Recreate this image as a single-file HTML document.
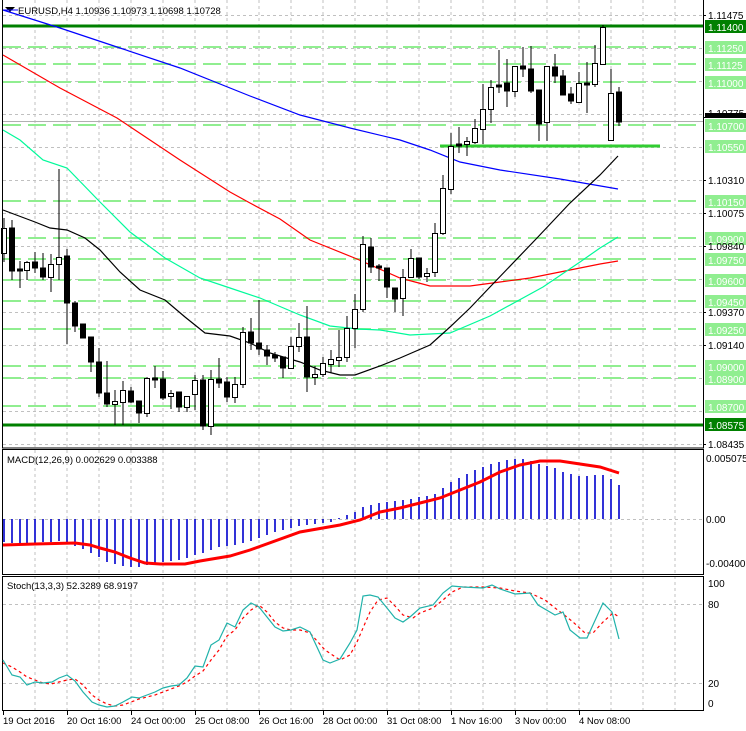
<!DOCTYPE html>
<html><head><meta charset="utf-8"><style>
html,body{margin:0;padding:0;background:#fff;}
svg{display:block;font-family:"Liberation Sans",sans-serif;}
</style></head><body>
<svg width="746" height="731" viewBox="0 0 746 731" xmlns="http://www.w3.org/2000/svg">
<rect width="746" height="731" fill="#fff"/>
<g stroke="#c0c0c0" stroke-width="1" stroke-dasharray="3,3" fill="none">
<path d="M35 0V710M67 0V710M99 0V710M131 0V710M163 0V710M195 0V710M227 0V710M259 0V710M291 0V710M323 0V710M355 0V710M387 0V710M419 0V710M451 0V710M483 0V710M515 0V710M547 0V710M579 0V710M611 0V710M643 0V710M675 0V710"/>
<path d="M3 15.5H703M3 48.5H703M3 81.5H703M3 114.5H703M3 147.5H703M3 180.5H703M3 213.5H703M3 246.5H703M3 279.5H703M3 312.5H703M3 345.5H703M3 378.5H703M3 411.5H703M3 444.5H703"/>
<path d="M3 519.5H703M3 604.5H703M3 683.5H703"/>
</g>
<g stroke="#90ee90" stroke-width="2" stroke-dasharray="18,7" fill="none">
<path d="M3 47H703M3 64H703M3 82H703M3 125H703M3 201H703M3 238H703M3 259H703M3 280H703M3 301H703M3 329H703M3 366H703M3 378H703M3 406H703"/>
</g>
<path d="M3 121.5H703" stroke="#b0b0b0" stroke-width="1"/>
<path d="M3 26H703M3 425H703" stroke="#008000" stroke-width="3"/>
<path d="M440 146H660" stroke="#32cd32" stroke-width="3"/>
<g fill="none" stroke-width="1.2">
<polyline stroke="#0000ff" points="3,10 60,28 120,48 180,68 250,96 300,115 350,128 400,140 430,150 460,162 500,170 560,179 618,189"/>
<polyline stroke="#ff0000" points="3,55 60,88 117,118 180,160 230,192 250,203 280,219 310,240 357,259 400,278 430,286 470,286 500,282 530,278 560,272 600,264 618,261"/>
<polyline stroke="#00fa9a" points="3,130 20,140 43,160 67,168 100,202 130,232 165,258 200,278 230,288 260,298 300,315 330,326 358,329 380,330 410,335 450,333 490,316 543,287 580,262 600,248 618,237"/>
<polyline stroke="#000" points="3,210 35,222 50,228 67,230 85,238 100,250 120,272 140,290 165,300 185,317 205,333 230,336 250,343 270,353 300,362 320,370 340,375 355,375 380,366 400,358 430,345 450,327 470,308 490,287 537,238 570,203 600,175 618,156"/>
</g>
<g stroke="#000" stroke-width="1">
<path d="M4 218V262M12 220V280M20 261V288M27 261V280M35 252V273M43 253V280M51 254V292M59 169V280M67 249V344M75 301V332M83 324V338M91 337V372M99 348V397M107 361V407M115 390V425M123 381V425M131 387V403M139 401V423M147 377V417M155 366V388M163 371V400M171 390V409M179 392V412M187 396V412M195 375V410M203 375V430M211 370V435M219 358V388M227 377V402M235 377V403M243 327V388M251 318V350M259 300V355M267 345V365M275 352V362M283 357V378M291 337V368M299 323V352M307 306V392M315 366V385M323 357V377M331 350V373M339 330V367M347 316V362M355 294V348M363 236V312M371 238V273M379 264V281M387 268V298M395 288V312M403 269V316M411 249V277M419 258V279M427 268V282M435 223V277M443 175V235M451 133V194M459 127V153M467 137V156M475 119V144M483 84V144M491 80V123M499 50V93M507 59V107M515 66V97M523 47V77M531 46V93M539 90V141M547 66V141M555 54V83M563 70V95M571 87V104M579 72V102M587 62V113M595 45V87M603 25V64M611 69V141M619 87V126"/>
<g fill="#fff">
<rect x="1.5" y="228.5" width="5" height="25"/><rect x="24.5" y="262.5" width="5" height="8"/><rect x="48.5" y="264.5" width="5" height="13"/><rect x="56.5" y="257.5" width="5" height="7"/>
<rect x="112.5" y="401.5" width="5" height="3"/><rect x="120.5" y="390.5" width="5" height="12"/><rect x="144.5" y="378.5" width="5" height="35"/><rect x="168.5" y="393.5" width="5" height="3"/>
<rect x="184.5" y="396.5" width="5" height="11"/><rect x="192.5" y="380.5" width="5" height="14"/><rect x="208.5" y="379.5" width="5" height="47"/><rect x="232.5" y="384.5" width="5" height="13"/>
<rect x="240.5" y="332.5" width="5" height="52"/><rect x="288.5" y="346.5" width="5" height="22"/><rect x="296.5" y="337.5" width="5" height="9"/><rect x="312.5" y="374.5" width="5" height="3"/>
<rect x="320.5" y="363.5" width="5" height="11"/><rect x="328.5" y="359.5" width="5" height="5"/><rect x="336.5" y="357.5" width="5" height="3"/><rect x="344.5" y="328.5" width="5" height="29"/>
<rect x="352.5" y="309.5" width="5" height="19"/><rect x="360.5" y="244.5" width="5" height="65"/><rect x="400.5" y="277.5" width="5" height="21"/><rect x="408.5" y="258.5" width="5" height="19"/>
<rect x="424.5" y="273.5" width="5" height="3"/><rect x="432.5" y="233.5" width="5" height="39"/><rect x="440.5" y="188.5" width="5" height="45"/><rect x="448.5" y="146.5" width="5" height="43"/>
<rect x="464.5" y="141.5" width="5" height="3"/><rect x="472.5" y="128.5" width="5" height="14"/><rect x="480.5" y="109.5" width="5" height="20"/><rect x="488.5" y="87.5" width="5" height="22"/>
<rect x="512.5" y="66.5" width="5" height="25"/><rect x="544.5" y="66.5" width="5" height="56"/><rect x="576.5" y="83.5" width="5" height="19"/><rect x="592.5" y="63.5" width="5" height="21"/>
<rect x="600.5" y="27.5" width="5" height="37"/><rect x="608.5" y="93.5" width="5" height="47"/>
</g>
<g fill="#000">
<rect x="9.5" y="228" width="5" height="43"/><rect x="17.5" y="269" width="5" height="2"/><rect x="32.5" y="262" width="5" height="6"/><rect x="40.5" y="268" width="5" height="9"/>
<rect x="64.5" y="256" width="5" height="47"/><rect x="72.5" y="303" width="5" height="23"/><rect x="80.5" y="324" width="5" height="14"/><rect x="88.5" y="337" width="5" height="25"/>
<rect x="96.5" y="362" width="5" height="31"/><rect x="104.5" y="393" width="5" height="11"/><rect x="128.5" y="391" width="5" height="11"/><rect x="136.5" y="401" width="5" height="12"/>
<rect x="152.5" y="378" width="5" height="2"/><rect x="160.5" y="379" width="5" height="19"/><rect x="176.5" y="392" width="5" height="15"/><rect x="200.5" y="380" width="5" height="46"/>
<rect x="216.5" y="379" width="5" height="4"/><rect x="224.5" y="382" width="5" height="15"/><rect x="248.5" y="332" width="5" height="11"/><rect x="256.5" y="343" width="5" height="6"/>
<rect x="264.5" y="350" width="5" height="6"/><rect x="272.5" y="355" width="5" height="3"/><rect x="280.5" y="357" width="5" height="11"/><rect x="304.5" y="337" width="5" height="40"/>
<rect x="368.5" y="247" width="5" height="20"/><rect x="376.5" y="266" width="5" height="2"/><rect x="384.5" y="268" width="5" height="19"/><rect x="392.5" y="288" width="5" height="11"/>
<rect x="416.5" y="258" width="5" height="19"/><rect x="456.5" y="144" width="5" height="2"/><rect x="496.5" y="85" width="5" height="2"/><rect x="504.5" y="83" width="5" height="8"/>
<rect x="520.5" y="66" width="5" height="3"/><rect x="528.5" y="69" width="5" height="22"/><rect x="536.5" y="90" width="5" height="34"/><rect x="552.5" y="67" width="5" height="9"/>
<rect x="560.5" y="76" width="5" height="19"/><rect x="568.5" y="94" width="5" height="7"/><rect x="584.5" y="83" width="5" height="2"/><rect x="616.5" y="92" width="5" height="30"/>
</g>
</g>
<g stroke="#000" fill="none" stroke-width="1">
<rect x="2.5" y="-1" width="701" height="449"/>
<rect x="2.5" y="449.5" width="701" height="125"/>
<rect x="2.5" y="576.5" width="701" height="134"/>
</g>
<path stroke="#0000cd" stroke-width="1.6" d="M4 519V542M12 519V543M20 519V543M27 519V543M35 519V543M43 519V542M51 519V542M59 519V541M67 519V543M75 519V546M83 519V549M91 519V553M99 519V557M107 519V562M115 519V564M123 519V566M131 519V567M139 519V567M147 519V565M155 519V563M163 519V562M171 519V561M179 519V560M187 519V558M195 519V555M203 519V553M211 519V550M219 519V547M227 519V546M235 519V545M243 519V543M251 519V541M259 519V538M267 519V535M275 519V532M283 519V530M291 519V528M299 519V526M307 519V525M315 519V524M323 519V523M331 519V522M339 519V518M347 519V515M355 519V512M363 519V507M371 519V505M379 519V503M387 519V502M395 519V501M403 519V500M411 519V499M419 519V497M427 519V496M435 519V494M443 519V488M451 519V482M459 519V478M467 519V474M475 519V470M483 519V467M491 519V464M499 519V462M507 519V460M515 519V459M523 519V459M531 519V461M539 519V464M547 519V466M555 519V468M563 519V472M571 519V474M579 519V476M587 519V476M595 519V475M603 519V475M611 519V479M619 519V485"/>
<polyline fill="none" stroke="#ff0000" stroke-width="3" points="3,545 35,544 75,543 90,545 100,548 115,552 130,558 145,563 160,564 185,564 200,561 230,556 250,550 300,532 340,525 360,520 380,512 400,508 420,503 440,498 460,490 480,482 500,472 520,465 540,461 560,461 580,464 600,467 619,473"/>
<polyline fill="none" stroke="#ff0000" stroke-width="1.2" stroke-dasharray="3,3" points="3,663 12,667 20,672 27,677 35,680 43,683 51,684 59,682 67,680 75,679 83,685 92,695 99,700 107,704 115,706 123,705 131,702 139,699 147,697 155,695 163,692 171,689 179,686 187,682 195,676 203,671 211,660 219,650 227,636 235,630 243,618 251,610 259,605 267,612 275,622 283,628 291,630 300,630 310,633 325,650 340,660 350,655 357,642 363,628 370,612 378,600 387,598 395,606 403,615 413,618 420,613 433,608 443,600 452,592 463,587 483,587 500,588 515,591 530,593 545,600 555,608 563,614 573,622 585,633 593,633 603,622 613,613 619,617"/>
<polyline fill="none" stroke="#20b2aa" stroke-width="1.2" points="3,660 12,675 20,677 27,685 35,682 43,683 52,682 59,678 67,675 75,681 83,692 92,702 99,705 107,707 115,706 123,702 132,697 139,698 147,695 155,692 163,688 171,686 179,685 187,678 195,666 203,667 211,645 219,640 227,623 235,627 243,610 251,603 259,607 267,617 275,627 283,631 291,630 300,627 310,632 323,660 330,663 340,659 350,643 357,630 363,596 370,595 378,597 387,608 395,618 403,622 410,617 420,608 433,605 443,593 452,586 463,587 483,588 492,585 500,589 515,594 530,593 538,605 555,615 563,612 570,630 580,638 587,638 603,603 612,612 619,639"/>
<g font-size="10" fill="#000">
<g fill="#90ee90">
<rect x="705" y="41" width="41" height="13"/><rect x="705" y="58" width="41" height="13"/><rect x="705" y="76" width="41" height="13"/>
<rect x="705" y="113" width="41" height="4"/>
<rect x="705" y="119" width="41" height="13"/><rect x="705" y="140" width="41" height="13"/><rect x="705" y="195" width="41" height="13"/>
<rect x="705" y="232" width="41" height="13"/><rect x="705" y="253" width="41" height="13"/><rect x="705" y="274" width="41" height="13"/><rect x="705" y="295" width="41" height="13"/>
<rect x="705" y="323" width="41" height="13"/><rect x="705" y="360" width="41" height="13"/><rect x="705" y="372" width="41" height="13"/><rect x="705" y="400" width="41" height="13"/>
</g>
<rect x="705" y="113" width="41" height="5" fill="#000"/>
<rect x="705" y="20" width="41" height="13" fill="#008000"/>
<rect x="705" y="418" width="41" height="13" fill="#008000"/>
<g fill="#000">
<text x="708" y="19">1.11475</text>
<text x="708" y="117">1.10775</text>
<text x="708" y="184">1.10310</text>
<text x="708" y="217">1.10075</text>
<text x="708" y="250">1.09840</text>
<text x="708" y="316">1.09370</text>
<text x="708" y="349">1.09140</text>
<text x="708" y="448">1.08435</text>
</g>
<g fill="#fff">
<text x="708" y="31">1.11400</text><text x="708" y="52">1.11250</text><text x="708" y="69">1.11125</text><text x="708" y="87">1.11000</text>
<text x="708" y="130">1.10700</text><text x="708" y="151">1.10550</text><text x="708" y="206">1.10150</text><text x="708" y="243">1.09900</text>
<text x="708" y="264">1.09750</text><text x="708" y="285">1.09600</text><text x="708" y="306">1.09450</text><text x="708" y="334">1.09250</text>
<text x="708" y="371">1.09000</text><text x="708" y="383">1.08900</text><text x="708" y="411">1.08700</text><text x="708" y="429">1.08575</text>
</g>
<text x="706" y="462">0.005075</text>
<text x="706" y="523">0.00</text>
<text x="706" y="567">-0.004006</text>
<text x="708" y="587">100</text>
<text x="708" y="608">80</text>
<text x="708" y="687">20</text>
<text x="708" y="707">0</text>
</g>
<g stroke="#000"><path d="M703 15.5h3M703 117.5h3M703 180.5h3M703 213.5h3M703 246.5h3M703 312.5h3M703 345.5h3M703 444.5h3"/></g>
<path d="M5 7h10l-5 5z" fill="#000"/>
<path d="M3 10H18" stroke="#00f" stroke-width="1"/>
<g font-size="9.5" fill="#000">
<text x="18" y="14">EURUSD,H4  1.10936 1.10973 1.10698 1.10728</text>
<text x="7" y="463">MACD(12,26,9) 0.002629 0.003388</text>
<text x="7" y="589">Stoch(13,3,3) 52.3289 68.9197</text>
</g>
<g stroke="#000"><path d="M3.5 711v4M67.5 711v4M131.5 711v4M195.5 711v4M259.5 711v4M323.5 711v4M387.5 711v4M451.5 711v4M515.5 711v4M579.5 711v4"/></g>
<g font-size="9.5" fill="#000">
<text x="3" y="724">19 Oct 2016</text>
<text x="67" y="724">20 Oct 16:00</text>
<text x="131" y="724">24 Oct 00:00</text>
<text x="195" y="724">25 Oct 08:00</text>
<text x="259" y="724">26 Oct 16:00</text>
<text x="323" y="724">28 Oct 00:00</text>
<text x="387" y="724">31 Oct 08:00</text>
<text x="451" y="724">1 Nov 16:00</text>
<text x="515" y="724">3 Nov 00:00</text>
<text x="579" y="724">4 Nov 08:00</text>
</g>
</svg>
</body></html>
